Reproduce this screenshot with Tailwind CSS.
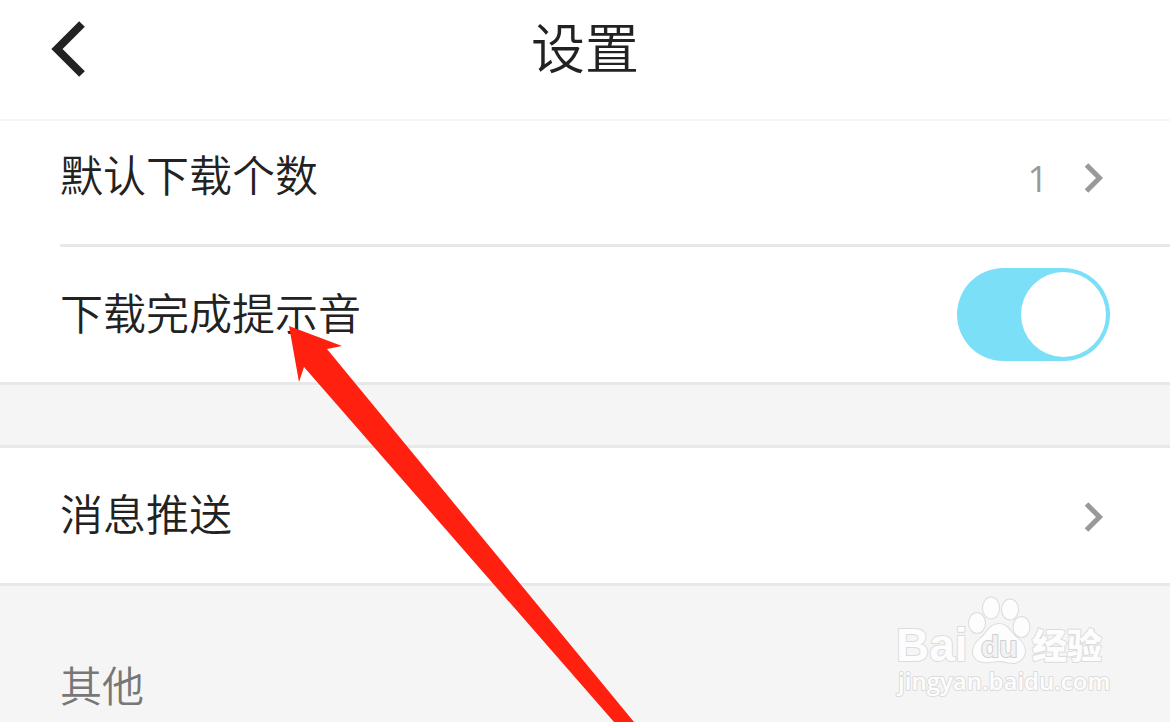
<!DOCTYPE html>
<html lang="zh-CN">
<head>
<meta charset="utf-8">
<meta name="viewport" content="width=device-width, initial-scale=1">
<title>设置</title>
<script src="https://cdn.jsdelivr.net/npm/@tailwindcss/browser@4"></script>
</head>
<body class="relative min-h-screen overflow-hidden bg-[#f5f5f5] font-['Noto_Sans_CJK_SC',sans-serif] text-[43px] leading-[64px] font-[350] text-[#222]">
  <header class="grid grid-cols-[1fr_auto_1fr] items-center border-b-2 border-[#f5f5f5] bg-white pt-[6px] pb-[33px]">
    <button type="button" aria-label="返回" class="ml-[50px] justify-self-start">
      <svg class="block h-16 w-9" viewBox="0 -6 36 64" fill="none" stroke="#222" stroke-width="8"><path d="M32 4 7 29 32 54"/></svg>
    </button>
    <h1 class="text-[54px] leading-[80px]">设置</h1>
  </header>

  <main>
    <section class="border-b-3 border-[#e8e8e8] bg-white">
      <button type="button" class="flex w-full items-center pl-[60px] text-left">
        <span class="flex flex-1 items-center border-b-3 border-[#e8e8e8] pt-5 pr-[66px] pb-[31px]">
          <span class="flex-1 pb-2">默认下载个数</span>
          <span class="mr-9 pt-1 font-['Open_Sans',sans-serif] text-[36px] leading-[64px] font-normal text-[#999]">1</span>
          <svg class="h-8 w-5" viewBox="0 0 20 32" fill="none" stroke="#999" stroke-width="5" aria-hidden="true"><path d="M2.500 4 15.500 17 2.500 30"/></svg>
        </span>
      </button>
      <div class="flex items-center justify-between py-[21px] pr-[60px] pl-[60px]">
        <label for="sound" class="pb-2">下载完成提示音</label>
        <input id="sound" type="checkbox" role="switch" checked class="h-[93px] w-[153px] appearance-none rounded-full bg-[#7adff7] before:mt-1 before:ml-[64px] before:block before:size-[85px] before:rounded-full before:bg-white">
      </div>
    </section>

    <section class="mt-[60px] border-y-3 border-[#e8e8e8] bg-white">
      <button type="button" class="flex w-full items-center pt-8 pr-[66px] pb-[31px] pl-[60px] text-left">
        <span class="flex-1 pb-2">消息推送</span>
        <svg class="h-8 w-5" viewBox="0 0 20 32" fill="none" stroke="#999" stroke-width="5" aria-hidden="true"><path d="M2.500 4 15.500 17 2.500 30"/></svg>
      </button>
    </section>

    <h2 class="mt-[66px] pl-[60px] text-[42px] leading-[64px] text-[#777]">其他</h2>
  </main>

  <!-- pointer arrow -->
  <svg class="pointer-events-none absolute top-[326px] left-[289px] h-[396px] w-[346px]" viewBox="0 0 346 396" fill="#ff2010" aria-hidden="true"><path d="M0 0 53 20 38 23 345 396H325L15 41 10 56Z"/></svg>

  <!-- watermark -->
  <svg class="pointer-events-none absolute top-[590px] right-[58px] h-[112px] w-[220px]" viewBox="0 0 220 112" fill="#fdfdfd" stroke="#dcdcdc" stroke-width="2" stroke-linejoin="round" paint-order="stroke" aria-label="Baidu 经验">
    <text x="4" y="71" class="font-['Liberation_Sans',sans-serif] text-[46px] font-bold">Bai</text>
    <ellipse cx="85" cy="33" rx="8" ry="10"/>
    <ellipse cx="99" cy="18" rx="8" ry="10.500"/>
    <ellipse cx="118" cy="19.500" rx="8" ry="10"/>
    <ellipse cx="129.500" cy="37" rx="8" ry="10"/>
    <path d="M107 34C98 34 95 43 89 48 84 52 81 56 81 62 81 68 86 72 92 72 98 73 102 71 107 71S116 73 122 73C128 72 133 67 133 61 133 55 129 51 124 47 118 42 116 34 107 34Z"/>
    <text x="89" y="67" class="font-['Liberation_Sans',sans-serif] text-[30px] font-bold" fill="#f2f2f2" stroke="#cfcfcf">du</text>
    <text x="140" y="69" class="font-['Noto_Sans_CJK_SC',sans-serif] text-[35px] font-black">经验</text>
    <text x="6" y="100" class="font-['Open_Sans',sans-serif] text-[24px] font-semibold">jingyan.baidu.com</text>
  </svg>
</body>
</html>
